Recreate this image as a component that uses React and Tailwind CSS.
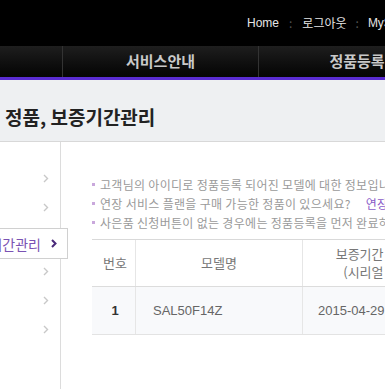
const FONT = { fontFamily: "'Noto Sans CJK KR', 'Noto Sans', sans-serif" };
const LATIN = { fontFamily: "'Liberation Sans', 'Noto Sans CJK KR', sans-serif" };

function Chevron({ active }) {
  return (
    <svg width="6" height="9" viewBox="0 0 6 9" className="shrink-0">
      <path d="M1 1l3.5 3.5L1 8" fill="none" stroke={active ? '#4a2a7a' : '#c8c8c8'} strokeWidth={active ? 2 : 1.4} />
    </svg>
  );
}

const SIDE = ['정품등록', '정품조회', '정품, 보증기간관리', '사은품신청', '연장서비스', '회원정보'];

function Bullet() {
  return <span className="w-[3px] h-[3px] bg-[#c9a8dc] shrink-0" />;
}

export default function App() {
  return (
    <div className="w-[385px] h-[389px] overflow-hidden bg-white" style={FONT}>
      {/* top utility bar */}
      <div className="h-[46px] bg-black flex items-center pl-[247px] text-[12px] text-[#e6e6e6] whitespace-nowrap">
        <span style={LATIN}>Home</span>
        <span className="mx-[10px] text-[#555]">:</span>
        <span>로그아웃</span>
        <span className="mx-[9px] text-[#555]">:</span>
        <span style={LATIN}>MyService</span>
      </div>

      {/* main nav */}
      <div className="h-[31px] flex bg-gradient-to-b from-[#1e1e1e] to-[#050505] whitespace-nowrap">
        <div className="w-[63px] shrink-0 border-r border-[#333]" />
        <div className="w-[196px] shrink-0 border-r border-[#333] flex items-center justify-center text-[15px] font-bold text-[#c9c9c9]">서비스안내</div>
        <div className="w-[196px] shrink-0 flex items-center justify-center text-[15px] font-bold text-[#c9c9c9]">정품등록</div>
      </div>
      <div className="h-[3px] bg-[#5a2cd2]" />

      {/* page title */}
      <div className="h-[62px] bg-[#eef0f2] border-b border-[#d8d8d8] flex items-end pb-[12px] pl-[5px]">
        <h1 className="text-[19px] leading-[24px] font-bold text-[#222] whitespace-nowrap">정품, 보증기간관리</h1>
      </div>

      <div className="flex h-[300px]">
        {/* side menu */}
        <div className="w-[61px] shrink-0 border-r border-[#dcdcdc] pt-[22px]">
          {SIDE.map((s, i) =>
            i === 2 ? (
              <div key={s} className="relative z-10 w-[68px] h-[31px] mt-[6px] mb-[-2px] bg-white border border-l-0 border-[#d0d0d0] flex items-center justify-end pr-[10px] gap-[10px] whitespace-nowrap">
                <span className="text-[14px] text-[#7a52b3] leading-none">{s}</span>
                <Chevron active />
              </div>
            ) : (
              <div key={s} className="h-[29px] flex items-center justify-end pr-[11px]">
                <Chevron />
              </div>
            )
          )}
        </div>

        {/* content */}
        <div className="flex-1 min-w-0 pl-[31px] pt-[33px] whitespace-nowrap">
          <ul className="text-[12px] leading-[19px] text-[#9a9a9a] tracking-[0.3px]">
            <li className="flex items-center gap-[5px]"><Bullet />고객님의 아이디로 정품등록 되어진 모델에 대한 정보입니다.</li>
            <li className="flex items-center gap-[5px]"><Bullet />연장 서비스 플랜을 구매 가능한 정품이 있으세요?<span className="ml-[10px] text-[#8a5cc8]">연장 서비스 플랜 구매</span></li>
            <li className="flex items-center gap-[5px]"><Bullet />사은품 신청버튼이 없는 경우에는 정품등록을 먼저 완료하세요.</li>
          </ul>

          <div className="mt-[7px] w-[500px] border-t border-[#d9d9d9]">
            <div className="flex h-[47px] border-b border-[#dcdcdc] text-[13px] text-[#777]">
              <div className="w-[44px] shrink-0 border-r border-[#e6e6e6] flex items-center justify-center pl-[3px]">번호</div>
              <div className="w-[167px] shrink-0 border-r border-[#e6e6e6] flex items-center justify-center">모델명</div>
              <div className="w-[152px] shrink-0 flex flex-col items-center justify-center leading-[18px]">
                <span>보증기간 만료일</span>
                <span>(시리얼 번호)</span>
              </div>
            </div>
            <div className="flex h-[48px] bg-[#f8f9fb] border-b border-[#e3e3e3] text-[13px] text-[#666]" style={LATIN}>
              <div className="w-[44px] shrink-0 border-r border-[#e6e6e6] flex items-center justify-center pl-[3px] font-bold text-[#333]">1</div>
              <div className="w-[167px] shrink-0 border-r border-[#e6e6e6] flex items-center pl-[17px]">SAL50F14Z</div>
              <div className="w-[152px] shrink-0 flex items-center pl-[15px]">2015-04-29</div>
            </div>
          </div>
        </div>
      </div>
    </div>
  );
}
